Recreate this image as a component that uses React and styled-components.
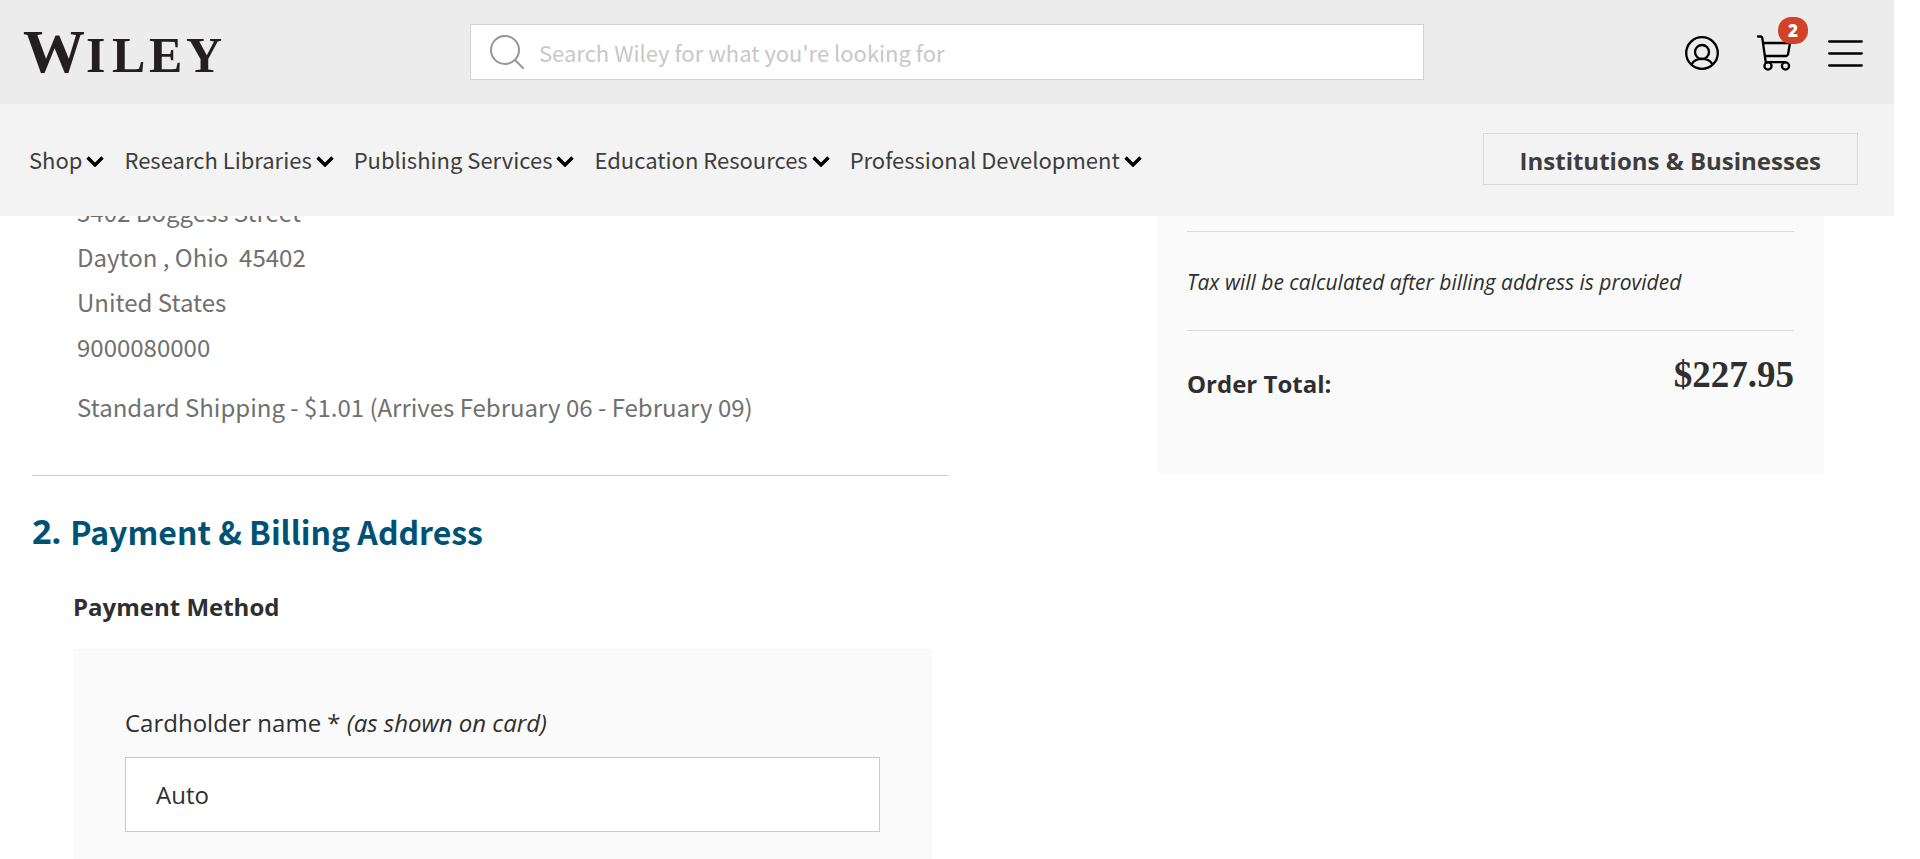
import React from "react";
import styled, { createGlobalStyle } from "styled-components";

const sourceSans = `"Noto Sans CJK SC", "Open Sans", sans-serif`;
const openSans = `"Open Sans", "Noto Sans", sans-serif`;
const serif = `"Liberation Serif", serif`;

const GlobalStyle = createGlobalStyle`
  *, *::before, *::after { box-sizing: border-box; }
  body {
    margin: 0;
    background: #fff;
    color: #2f2f2f;
    font-family: ${openSans};
    font-size: 24px;
  }
  h2, h3, p { margin: 0; }
  button, input { font: inherit; color: inherit; }
`;

const Page = styled.div`
  min-height: 100vh;
  padding-right: 26px;
`;

const SiteHeader = styled.header`
  position: sticky;
  top: 0;
  z-index: 2;
`;

const TopBar = styled.div`
  display: grid;
  grid-template-columns: 235fr 477fr 235fr;
  align-items: center;
  height: 104px;
  background: #ececec;
`;

const Logo = styled.a`
  display: flex;
  padding-left: 23px;
  color: #231f20;
  text-decoration: none;

  svg {
    font-family: ${serif};
    font-weight: 700;
    font-size: 50px;
  }
`;

const SearchForm = styled.form`
  display: flex;
  align-items: center;
  gap: 14px;
  height: 56px;
  padding: 0 18px;
  border: 1px solid #ced2d9;
  background: #fff;
`;

const SearchInput = styled.input`
  flex: 1;
  min-width: 0;
  padding: 0;
  border: 0;
  outline: 0;
  background: transparent;
  font-family: ${sourceSans};
  font-size: 22px;
  line-height: 32px;

  &::placeholder {
    color: #c8c8c8;
    opacity: 1;
  }
`;

const Actions = styled.div`
  display: flex;
  align-items: center;
  justify-content: flex-end;
  gap: 36px;
  padding: 2px 31px 0 0;
`;

const IconButton = styled.button`
  position: relative;
  display: flex;
  padding: 0;
  border: 0;
  background: none;
  color: #000;
  cursor: pointer;
`;

const Badge = styled.span`
  position: absolute;
  top: -18px;
  right: -16px;
  width: 30px;
  border-radius: 13px;
  background: #d24128;
  color: #fff;
  font-weight: 800;
  font-size: 17px;
  line-height: 27px;
  text-align: center;
`;

const NavBar = styled.div`
  display: flex;
  align-items: center;
  justify-content: space-between;
  height: 112px;
  padding: 0 36px 2px 29px;
  background: #f3f3f3;
`;

const Nav = styled.nav`
  display: flex;
  gap: 20px;
`;

const NavItem = styled.button`
  display: flex;
  align-items: center;
  gap: 4px;
  padding: 0;
  border: 0;
  background: none;
  color: #3d3d3d;
  font-family: ${sourceSans};
  font-size: 22px;
  line-height: 32px;
  white-space: nowrap;
  cursor: pointer;
`;

const OutlineLink = styled.a`
  padding: 10px 36px 6px;
  border: 1px solid #d8d8d8;
  color: #3d3d3d;
  font-weight: 700;
  line-height: 34px;
  text-decoration: none;
  white-space: nowrap;
`;

const Main = styled.main`
  display: grid;
  grid-template-columns: 916fr 667fr;
  align-items: start;
  column-gap: 209px;
  margin-top: -27px;
  padding: 0 70px 0 32px;
`;

const ShippingSummary = styled.div`
  padding: 0 0 46px 45px;
  border-bottom: 1px solid #cacaca;
  color: #707070;
  font-family: ${sourceSans};
  font-size: 24px;
  line-height: 45px;
`;

const AddressLine = styled.div`
  white-space: pre;
`;

const ShippingMethod = styled.p`
  margin-top: 15px;
`;

const StepTitle = styled.h2`
  display: flex;
  align-items: center;
  gap: 9px;
  margin-top: 31px;
  color: #005274;
  font-family: ${sourceSans};
  font-weight: 700;
  font-size: 32px;
  line-height: 48px;
`;

const StepNumber = styled.span`
  font-family: ${openSans};
  font-size: 34px;
`;

const PaymentSection = styled.section`
  padding: 35px 16px 0 41px;
`;

const SectionTitle = styled.h3`
  font-size: 24px;
  line-height: 34px;
`;

const PaymentCard = styled.div`
  margin-top: 25px;
  padding: 57px 52px 27px;
  background: #fafafa;
`;

const FieldLabel = styled.label`
  display: block;
  line-height: 34px;
`;

const TextField = styled.input`
  display: block;
  width: 100%;
  height: 75px;
  margin-top: 17px;
  padding: 0 30px;
  border: 1px solid #cacaca;
  outline: 0;
  background: #fff;
`;

const OrderSummary = styled.aside`
  padding: 42px 30px 73px;
  background: #fafafa;
`;

const TaxNote = styled.p`
  padding: 33px 0 31px;
  border: solid #dadada;
  border-width: 1px 0;
  font-style: italic;
  font-size: 21px;
  line-height: 34px;
`;

const TotalRow = styled.div`
  display: flex;
  align-items: flex-start;
  justify-content: space-between;
  padding-top: 20px;
  font-weight: 700;
`;

const TotalLabel = styled.span`
  padding-top: 16px;
  line-height: 34px;
`;

const TotalAmount = styled.span`
  font-family: ${serif};
  font-size: 37px;
  line-height: 48px;
`;

const navItems = [
  "Shop",
  "Research Libraries",
  "Publishing Services",
  "Education Resources",
  "Professional Development",
];

const addressLines = ["5402 Boggess Street", "Dayton , Ohio  45402", "United States", "9000080000"];

const WileyLogo = () => (
  <svg width="204" height="74" viewBox="0 0 204 74" fill="currentColor" aria-hidden="true">
    <text y="57">
      <tspan x="0" fontSize="62">W</tspan>
      <tspan x="63 89 126 163">ILEY</tspan>
    </text>
  </svg>
);

const Chevron = () => (
  <svg width="18" height="16" viewBox="0 0 18 16" fill="none" stroke="#000" strokeWidth="3.4" aria-hidden="true">
    <path d="M1.5 6.5 9 14 16.5 6.5" />
  </svg>
);

const SearchIcon = () => (
  <svg width="36" height="36" viewBox="0 0 36 36" fill="none" stroke="#969696" strokeWidth="2" strokeLinecap="round" aria-hidden="true">
    <circle cx="16" cy="16" r="14" />
    <path d="m26 26 8 8" />
  </svg>
);

const AccountIcon = () => (
  <svg width="35" height="34" viewBox="0 0 35 34" fill="none" stroke="currentColor" strokeWidth="2.3" aria-hidden="true">
    <circle cx="17" cy="17" r="15.8" />
    <circle cx="17" cy="16" r="7" />
    <path d="M6.5 28.5C8.5 24.5 12.5 22.8 17 22.8S25.5 24.5 27.5 28.5" />
  </svg>
);

const CartIcon = () => (
  <svg width="36" height="36" viewBox="0 0 36 36" fill="none" stroke="currentColor" strokeWidth="2.3" strokeLinecap="round" strokeLinejoin="round" aria-hidden="true">
    <path d="M2 1.5H5.2L6.2 2.5 9.8 27.5M7.3 8H34L32 19.5 30.5 21H9.2M9.8 27.2H29" />
    <circle cx="12" cy="31" r="3.6" />
    <circle cx="29.5" cy="31" r="3.6" />
  </svg>
);

const MenuIcon = () => (
  <svg width="35" height="28" viewBox="0 0 35 28" fill="none" stroke="currentColor" strokeWidth="2.3" strokeLinecap="round" aria-hidden="true">
    <path d="M1.2 2.5h32.6M1.2 14.5h32.6M1.2 26.5h32.6" />
  </svg>
);

export default function App() {
  return (
    <>
      <GlobalStyle />
      <Page>
        <SiteHeader>
          <TopBar>
            <Logo href="#" aria-label="Wiley">
              <WileyLogo />
            </Logo>
            <SearchForm role="search">
              <SearchIcon />
              <SearchInput
                type="search"
                aria-label="Search Wiley"
                placeholder="Search Wiley for what you're looking for"
              />
            </SearchForm>
            <Actions>
              <IconButton type="button" aria-label="Account">
                <AccountIcon />
              </IconButton>
              <IconButton type="button" aria-label="Cart">
                <CartIcon />
                <Badge>2</Badge>
              </IconButton>
              <IconButton type="button" aria-label="Menu">
                <MenuIcon />
              </IconButton>
            </Actions>
          </TopBar>
          <NavBar>
            <Nav>
              {navItems.map((item) => (
                <NavItem key={item} type="button">
                  {item}
                  <Chevron />
                </NavItem>
              ))}
            </Nav>
            <OutlineLink href="#">Institutions &amp; Businesses</OutlineLink>
          </NavBar>
        </SiteHeader>

        <Main>
          <div>
            <ShippingSummary>
              {addressLines.map((line) => (
                <AddressLine key={line}>{line}</AddressLine>
              ))}
              <ShippingMethod>Standard Shipping - $1.01 (Arrives February 06 - February 09)</ShippingMethod>
            </ShippingSummary>

            <StepTitle>
              <StepNumber>2.</StepNumber>
              Payment &amp; Billing Address
            </StepTitle>

            <PaymentSection>
              <SectionTitle>Payment Method</SectionTitle>
              <PaymentCard>
                <FieldLabel htmlFor="cardholder">
                  Cardholder name * <em>(as shown on card)</em>
                </FieldLabel>
                <TextField id="cardholder" type="text" defaultValue="Auto" />
              </PaymentCard>
            </PaymentSection>
          </div>

          <OrderSummary>
            <TaxNote>Tax will be calculated after billing address is provided</TaxNote>
            <TotalRow>
              <TotalLabel>Order Total:</TotalLabel>
              <TotalAmount>$227.95</TotalAmount>
            </TotalRow>
          </OrderSummary>
        </Main>
      </Page>
    </>
  );
}
